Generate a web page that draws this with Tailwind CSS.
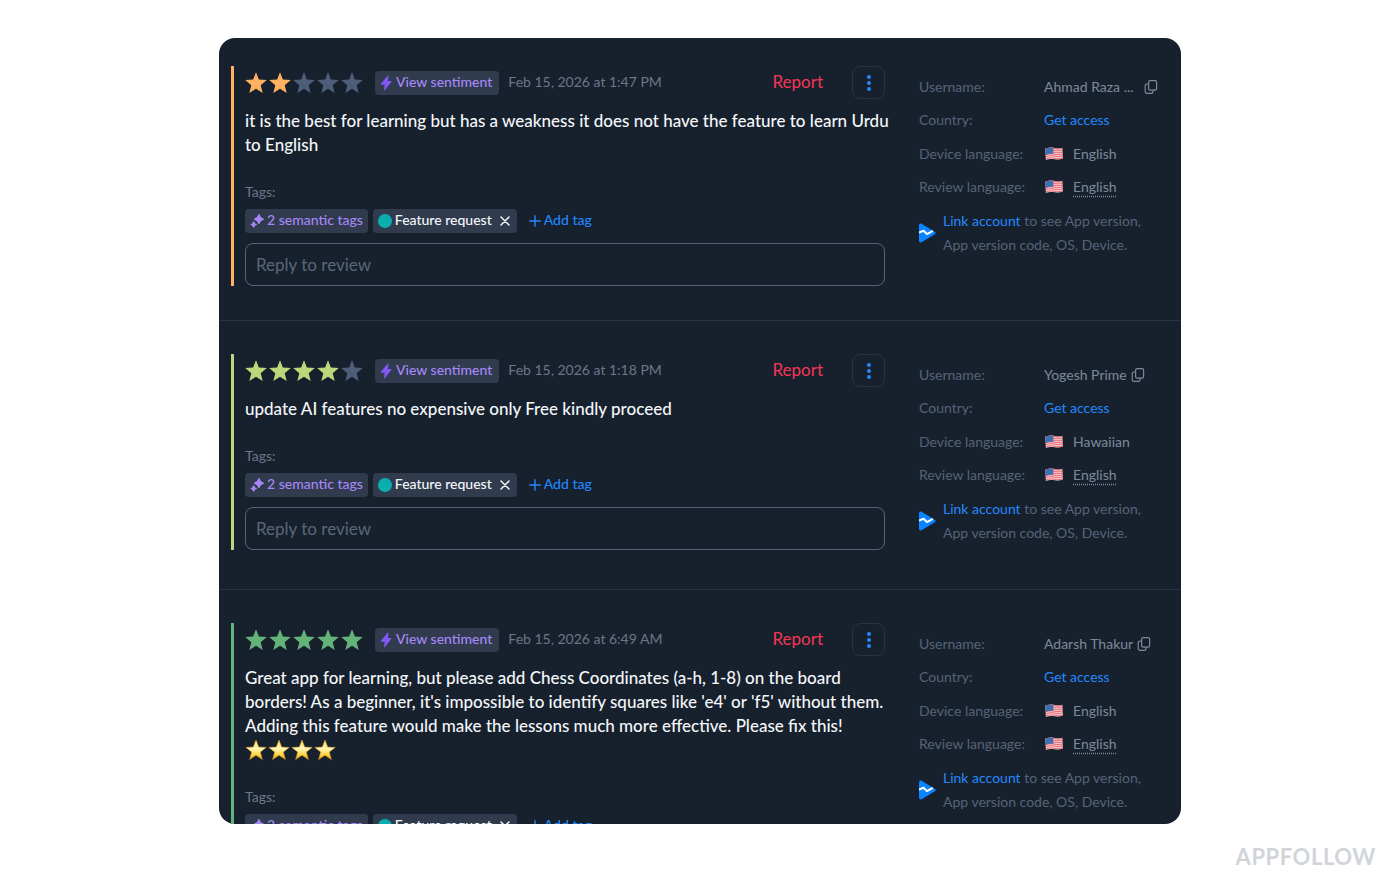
<!DOCTYPE html>
<html lang="en">
<head>
    <meta charset="UTF-8">
    <meta name="viewport" content="width=device-width, initial-scale=1.0">
    <title>Reviews</title>
    <script src="https://cdn.jsdelivr.net/npm/@tailwindcss/browser@4"></script>
</head>
<body class="bg-white font-['Lato',sans-serif] text-sm text-[#6b7789]">

    <!-- Shared icons -->
    <svg class="absolute size-0" aria-hidden="true">
        <symbol id="star" viewBox="0 0 22 22"><path d="M11 .3l2.900 7.300 7.900.5-6.100 5.100 2 7.800L11 16.800 4.300 21l2-7.800L.2 8.100l7.900-.5z" fill="currentColor"/></symbol>
        <symbol id="bolt" viewBox="0 0 12 16"><path d="M7.6.8c.4-.5 1-.2.9.4L8 6h2.900c.5 0 .7.5.4.9L4.900 15.100c-.4.5-1.100.2-.9-.4L4.700 9.800H1.200c-.5 0-.8-.5-.4-.9z" fill="currentColor"/></symbol>
        <symbol id="sparkles" viewBox="0 0 14 14"><path d="M8.900.700C9.700 3.400 10.600 4.300 13.300 5.100 10.600 5.900 9.700 6.800 8.900 9.500 8.100 6.800 7.200 5.900 4.500 5.100 7.200 4.300 8.100 3.400 8.900.700zM3.700 7.900c.5 1.700.9 2.100 2.600 2.600-1.700.5-2.100.9-2.600 2.600-.5-1.700-.9-2.100-2.600-2.600 1.700-.5 2.100-.9 2.600-2.600z" fill="currentColor" stroke="currentColor" stroke-width="1.200" stroke-linejoin="round"/></symbol>
        <symbol id="close" viewBox="0 0 10 10"><path d="M1 1l8 8M9 1l-8 8" fill="none" stroke="currentColor" stroke-width="1.500" stroke-linecap="round"/></symbol>
        <symbol id="plus" viewBox="0 0 12 12"><path d="M6 .700v10.600M.700 6h10.600" fill="none" stroke="currentColor" stroke-width="1.400" stroke-linecap="round"/></symbol>
        <symbol id="dots" viewBox="0 0 4 16"><g fill="currentColor"><circle cx="2" cy="2" r="2"/><circle cx="2" cy="8" r="2"/><circle cx="2" cy="14" r="2"/></g></symbol>
        <symbol id="copy" viewBox="0 0 14 14"><g fill="none" stroke="currentColor" stroke-width="1.200"><rect x="4.600" y=".700" width="8" height="9.400" rx="1.600"/><path d="M4.600 4H2.800A1.600 1.600 0 0 0 1.200 5.600v6.100a1.600 1.600 0 0 0 1.600 1.600h4.600A1.600 1.600 0 0 0 9 11.700v-1.600"/></g></symbol>
        <symbol id="flag" viewBox="0 0 20 14">
            <path d="M1.300 1.600C5 .400 8 .400 10.500 1S16 1.600 18.300.700L18.900 11.600c-2.900 1.100-5.400 1.100-8.200.600s-5.500-.5-8.800.8z" fill="#f3cfd4"/>
            <path d="M1.400 2.200C5 1 8 1 10.500 1.600s5.500.6 7.800-.3M1.500 4C5 2.800 8 2.800 10.500 3.400s5.600.6 7.900-.3M1.600 5.900c3.500-1.200 6.500-1.200 9-.6s5.600.6 7.900-.3M1.700 7.800c3.500-1.200 6.500-1.200 9-.6s5.600.6 7.900-.3M1.800 9.700c3.500-1.200 6.500-1.200 9-.6s5.600.6 7.900-.3M1.900 11.900c3.500-1.200 6.200-1.200 8.800-.6s5.700.6 8.100-.4" fill="none" stroke="#e8626c" stroke-width="1"/>
            <path d="M1.300 1.600C4 .700 6.800.500 9.200.800l.2 6.200c-2.500-.3-5.200-.1-7.800.8z" fill="#3f6fb0"/>
        </symbol>
        <symbol id="play" viewBox="0 0 17 20"><path d="M0 2.200C0 .700 1.400.100 2.600.800l13.200 7.900c1.100.7 1.100 1.900 0 2.600L2.600 19.200C1.400 19.900 0 19.300 0 17.800z" fill="#0a84ff"/><path d="M0 9.600l4.600-1.800 3.400 3.300 5.800-3.300" fill="none" stroke="#fff" stroke-width="2" stroke-linejoin="round"/></symbol>
        <linearGradient id="gold" x1="0" y1="0" x2="0" y2="1"><stop offset="0" stop-color="#ffd94a"/><stop offset=".45" stop-color="#fff6b8"/><stop offset=".75" stop-color="#fcd53c"/><stop offset="1" stop-color="#e99a17"/></linearGradient>
        <symbol id="gold-star" viewBox="0 0 22 22"><path d="M11 1l2.700 7.100 7.500.300-5.900 4.700 2.100 7.400L11 16.300l-6.400 4.200 2.100-7.400L.800 8.400l7.500-.3z" fill="url(#gold)" stroke="#e5a32a" stroke-width=".5" stroke-linejoin="round"/></symbol>
    </svg>

    <div class="flex h-screen flex-col items-center px-6 pt-[38px]">
        <main class="min-h-0 w-full max-w-[962px] flex-1 divide-y divide-[#273342] overflow-hidden rounded-2xl bg-[#17212d]">

            <!-- Review 1 -->
            <article class="flex items-start gap-[34px] pt-7 pr-6 pb-[34px] pl-3">
                <div class="min-w-0 flex-1 border-l-3 border-[#ffb061] pl-[11px]">
                    <header class="flex h-[33px] items-center">
                        <div class="flex gap-[2px] text-[#ffb061]" role="img" aria-label="2 out of 5 stars">
                            <svg class="size-[22px]"><use href="#star"/></svg>
                            <svg class="size-[22px]"><use href="#star"/></svg>
                            <svg class="size-[22px] text-[#4d5e78]"><use href="#star"/></svg>
                            <svg class="size-[22px] text-[#4d5e78]"><use href="#star"/></svg>
                            <svg class="size-[22px] text-[#4d5e78]"><use href="#star"/></svg>
                        </div>
                        <button class="ml-3 flex h-6 items-center gap-1 rounded bg-[#303b4e] pr-[7px] pl-[5px] font-medium text-[#a688f7]">
                            <svg class="h-4 w-3 text-[#8258f5]"><use href="#bolt"/></svg>
                            <span class="pb-[2px]">View sentiment</span>
                        </button>
                        <time class="ml-[9px] pb-[2px]">Feb 15, 2026 at 1:47 PM</time>
                        <button class="ml-auto text-[17px] text-[#f43654]">Report</button>
                        <button class="ml-[29px] flex size-[33px] items-center justify-center rounded-lg border border-[#273342] text-[#2388ff]" aria-label="More actions">
                            <svg class="h-4 w-1"><use href="#dots"/></svg>
                        </button>
                    </header>
                    <p class="mt-[10px] text-[17px] leading-6 font-medium whitespace-nowrap text-[#f5f7fa]">it is the best for learning but has a weakness it does not have the feature to learn Urdu<br>to English</p>
                    <div class="mt-6 leading-[22px]">Tags:</div>
                    <div class="mt-[6px] flex h-6 items-center gap-[5px]">
                        <button class="flex h-6 items-center gap-[3px] rounded bg-[#303b4e] px-[5px] font-medium text-[#a688f7]">
                            <svg class="size-[14px]"><use href="#sparkles"/></svg>
                            <span class="pb-[2px]">2 semantic tags</span>
                        </button>
                        <div class="flex h-6 items-center rounded bg-[#303b4e] pr-[7px] pl-[5px] font-medium text-[#f5f7fa]">
                            <span class="mr-[3px] size-[14px] rounded-full bg-[#0aaeae]"></span>
                            <span class="pb-[2px]">Feature request</span>
                            <button class="ml-2" aria-label="Remove tag"><svg class="size-[10px]"><use href="#close"/></svg></button>
                        </div>
                        <button class="ml-[7px] flex items-center gap-[3px] font-medium text-[#2388ff]">
                            <svg class="size-3"><use href="#plus"/></svg>
                            <span class="pb-[2px]">Add tag</span>
                        </button>
                    </div>
                    <input type="text" aria-label="Reply to review" placeholder="Reply to review" class="mt-[10px] block h-[43px] w-full rounded-lg border border-[#56647a] bg-transparent px-[10px] text-[17px] placeholder-[#5a677a]">
                </div>
                <aside class="w-[238px] shrink-0 pt-1 pb-[10px] text-[#566377]">
                    <dl class="grid h-[134px] grid-cols-[125px_1fr] grid-rows-4 items-center">
                        <dt>Username:</dt>
                        <dd class="flex items-center gap-1 text-[#7d899b]"><span class="w-24">Ahmad Raza ...</span><button aria-label="Copy username"><svg class="size-[14px]"><use href="#copy"/></svg></button></dd>
                        <dt>Country:</dt>
                        <dd><a href="#" class="text-[#2388ff]">Get access</a></dd>
                        <dt>Device language:</dt>
                        <dd class="flex items-center gap-[9px] text-[#7d899b]"><svg class="h-[14px] w-5"><use href="#flag"/></svg>English</dd>
                        <dt>Review language:</dt>
                        <dd class="flex items-center gap-[9px] text-[#7d899b]"><svg class="h-[14px] w-5"><use href="#flag"/></svg><span class="underline decoration-dotted underline-offset-4">English</span></dd>
                    </dl>
                    <div class="mt-[5px] flex items-center gap-[7px]">
                        <svg class="h-5 w-[17px] shrink-0"><use href="#play"/></svg>
                        <p class="leading-6"><a href="#" class="text-[#2388ff]">Link account</a> to see App version,<br>App version code, OS, Device.</p>
                    </div>
                </aside>
            </article>

            <!-- Review 2 -->
            <article class="flex items-start gap-[34px] pt-[33px] pr-6 pb-[34px] pl-3">
                <div class="min-w-0 flex-1 border-l-3 border-[#bcd67c] pl-[11px]">
                    <header class="flex h-[33px] items-center">
                        <div class="flex gap-[2px] text-[#bcd67c]" role="img" aria-label="4 out of 5 stars">
                            <svg class="size-[22px]"><use href="#star"/></svg>
                            <svg class="size-[22px]"><use href="#star"/></svg>
                            <svg class="size-[22px]"><use href="#star"/></svg>
                            <svg class="size-[22px]"><use href="#star"/></svg>
                            <svg class="size-[22px] text-[#4d5e78]"><use href="#star"/></svg>
                        </div>
                        <button class="ml-3 flex h-6 items-center gap-1 rounded bg-[#303b4e] pr-[7px] pl-[5px] font-medium text-[#a688f7]">
                            <svg class="h-4 w-3 text-[#8258f5]"><use href="#bolt"/></svg>
                            <span class="pb-[2px]">View sentiment</span>
                        </button>
                        <time class="ml-[9px] pb-[2px]">Feb 15, 2026 at 1:18 PM</time>
                        <button class="ml-auto text-[17px] text-[#f43654]">Report</button>
                        <button class="ml-[29px] flex size-[33px] items-center justify-center rounded-lg border border-[#273342] text-[#2388ff]" aria-label="More actions">
                            <svg class="h-4 w-1"><use href="#dots"/></svg>
                        </button>
                    </header>
                    <p class="mt-[10px] text-[17px] leading-6 font-medium text-[#f5f7fa]">update AI features no expensive only Free kindly proceed</p>
                    <div class="mt-6 leading-[22px]">Tags:</div>
                    <div class="mt-[6px] flex h-6 items-center gap-[5px]">
                        <button class="flex h-6 items-center gap-[3px] rounded bg-[#303b4e] px-[5px] font-medium text-[#a688f7]">
                            <svg class="size-[14px]"><use href="#sparkles"/></svg>
                            <span class="pb-[2px]">2 semantic tags</span>
                        </button>
                        <div class="flex h-6 items-center rounded bg-[#303b4e] pr-[7px] pl-[5px] font-medium text-[#f5f7fa]">
                            <span class="mr-[3px] size-[14px] rounded-full bg-[#0aaeae]"></span>
                            <span class="pb-[2px]">Feature request</span>
                            <button class="ml-2" aria-label="Remove tag"><svg class="size-[10px]"><use href="#close"/></svg></button>
                        </div>
                        <button class="ml-[7px] flex items-center gap-[3px] font-medium text-[#2388ff]">
                            <svg class="size-3"><use href="#plus"/></svg>
                            <span class="pb-[2px]">Add tag</span>
                        </button>
                    </div>
                    <input type="text" aria-label="Reply to review" placeholder="Reply to review" class="mt-[10px] block h-[43px] w-full rounded-lg border border-[#56647a] bg-transparent px-[10px] text-[17px] placeholder-[#5a677a]">
                </div>
                <aside class="w-[238px] shrink-0 pt-1 pb-[10px] text-[#566377]">
                    <dl class="grid h-[134px] grid-cols-[125px_1fr] grid-rows-4 items-center">
                        <dt>Username:</dt>
                        <dd class="flex items-center gap-1 text-[#7d899b]"><span>Yogesh Prime</span><button aria-label="Copy username"><svg class="size-[14px]"><use href="#copy"/></svg></button></dd>
                        <dt>Country:</dt>
                        <dd><a href="#" class="text-[#2388ff]">Get access</a></dd>
                        <dt>Device language:</dt>
                        <dd class="flex items-center gap-[9px] text-[#7d899b]"><svg class="h-[14px] w-5"><use href="#flag"/></svg>Hawaiian</dd>
                        <dt>Review language:</dt>
                        <dd class="flex items-center gap-[9px] text-[#7d899b]"><svg class="h-[14px] w-5"><use href="#flag"/></svg><span class="underline decoration-dotted underline-offset-4">English</span></dd>
                    </dl>
                    <div class="mt-[5px] flex items-center gap-[7px]">
                        <svg class="h-5 w-[17px] shrink-0"><use href="#play"/></svg>
                        <p class="leading-6"><a href="#" class="text-[#2388ff]">Link account</a> to see App version,<br>App version code, OS, Device.</p>
                    </div>
                </aside>
            </article>

            <!-- Review 3 -->
            <article class="flex items-start gap-[34px] pt-[33px] pr-6 pb-[34px] pl-3">
                <div class="min-w-0 flex-1 border-l-3 border-[#63b37b] pl-[11px]">
                    <header class="flex h-[33px] items-center">
                        <div class="flex gap-[2px] text-[#63b37b]" role="img" aria-label="5 out of 5 stars">
                            <svg class="size-[22px]"><use href="#star"/></svg>
                            <svg class="size-[22px]"><use href="#star"/></svg>
                            <svg class="size-[22px]"><use href="#star"/></svg>
                            <svg class="size-[22px]"><use href="#star"/></svg>
                            <svg class="size-[22px]"><use href="#star"/></svg>
                        </div>
                        <button class="ml-3 flex h-6 items-center gap-1 rounded bg-[#303b4e] pr-[7px] pl-[5px] font-medium text-[#a688f7]">
                            <svg class="h-4 w-3 text-[#8258f5]"><use href="#bolt"/></svg>
                            <span class="pb-[2px]">View sentiment</span>
                        </button>
                        <time class="ml-[9px] pb-[2px]">Feb 15, 2026 at 6:49 AM</time>
                        <button class="ml-auto text-[17px] text-[#f43654]">Report</button>
                        <button class="ml-[29px] flex size-[33px] items-center justify-center rounded-lg border border-[#273342] text-[#2388ff]" aria-label="More actions">
                            <svg class="h-4 w-1"><use href="#dots"/></svg>
                        </button>
                    </header>
                    <p class="mt-[10px] text-[17px] leading-6 font-medium text-[#f5f7fa]">Great app for learning, but please add Chess Coordinates (a-h, 1-8) on the board borders! As a beginner, it's impossible to identify squares like 'e4' or 'f5' without them. Adding this feature would make the lessons much more effective. Please fix this!</p>
                    <div class="flex h-6 items-center gap-px">
                        <svg class="size-[22px]"><use href="#gold-star"/></svg>
                        <svg class="size-[22px]"><use href="#gold-star"/></svg>
                        <svg class="size-[22px]"><use href="#gold-star"/></svg>
                        <svg class="size-[22px]"><use href="#gold-star"/></svg>
                    </div>
                    <div class="mt-6 leading-[22px]">Tags:</div>
                    <div class="mt-[6px] flex h-6 items-center gap-[5px]">
                        <button class="flex h-6 items-center gap-[3px] rounded bg-[#303b4e] px-[5px] font-medium text-[#a688f7]">
                            <svg class="size-[14px]"><use href="#sparkles"/></svg>
                            <span class="pb-[2px]">2 semantic tags</span>
                        </button>
                        <div class="flex h-6 items-center rounded bg-[#303b4e] pr-[7px] pl-[5px] font-medium text-[#f5f7fa]">
                            <span class="mr-[3px] size-[14px] rounded-full bg-[#0aaeae]"></span>
                            <span class="pb-[2px]">Feature request</span>
                            <button class="ml-2" aria-label="Remove tag"><svg class="size-[10px]"><use href="#close"/></svg></button>
                        </div>
                        <button class="ml-[7px] flex items-center gap-[3px] font-medium text-[#2388ff]">
                            <svg class="size-3"><use href="#plus"/></svg>
                            <span class="pb-[2px]">Add tag</span>
                        </button>
                    </div>
                </div>
                <aside class="w-[238px] shrink-0 pt-1 pb-[10px] text-[#566377]">
                    <dl class="grid h-[134px] grid-cols-[125px_1fr] grid-rows-4 items-center">
                        <dt>Username:</dt>
                        <dd class="flex items-center gap-1 text-[#7d899b]"><span>Adarsh Thakur</span><button aria-label="Copy username"><svg class="size-[14px]"><use href="#copy"/></svg></button></dd>
                        <dt>Country:</dt>
                        <dd><a href="#" class="text-[#2388ff]">Get access</a></dd>
                        <dt>Device language:</dt>
                        <dd class="flex items-center gap-[9px] text-[#7d899b]"><svg class="h-[14px] w-5"><use href="#flag"/></svg>English</dd>
                        <dt>Review language:</dt>
                        <dd class="flex items-center gap-[9px] text-[#7d899b]"><svg class="h-[14px] w-5"><use href="#flag"/></svg><span class="underline decoration-dotted underline-offset-4">English</span></dd>
                    </dl>
                    <div class="mt-[5px] flex items-center gap-[7px]">
                        <svg class="h-5 w-[17px] shrink-0"><use href="#play"/></svg>
                        <p class="leading-6"><a href="#" class="text-[#2388ff]">Link account</a> to see App version,<br>App version code, OS, Device.</p>
                    </div>
                </aside>
            </article>
        </main>

        <footer class="flex h-[66px] items-center self-end text-[22px] font-bold tracking-wide text-[#d1d5da]">APPFOLLOW</footer>
    </div>

</body>
</html>
